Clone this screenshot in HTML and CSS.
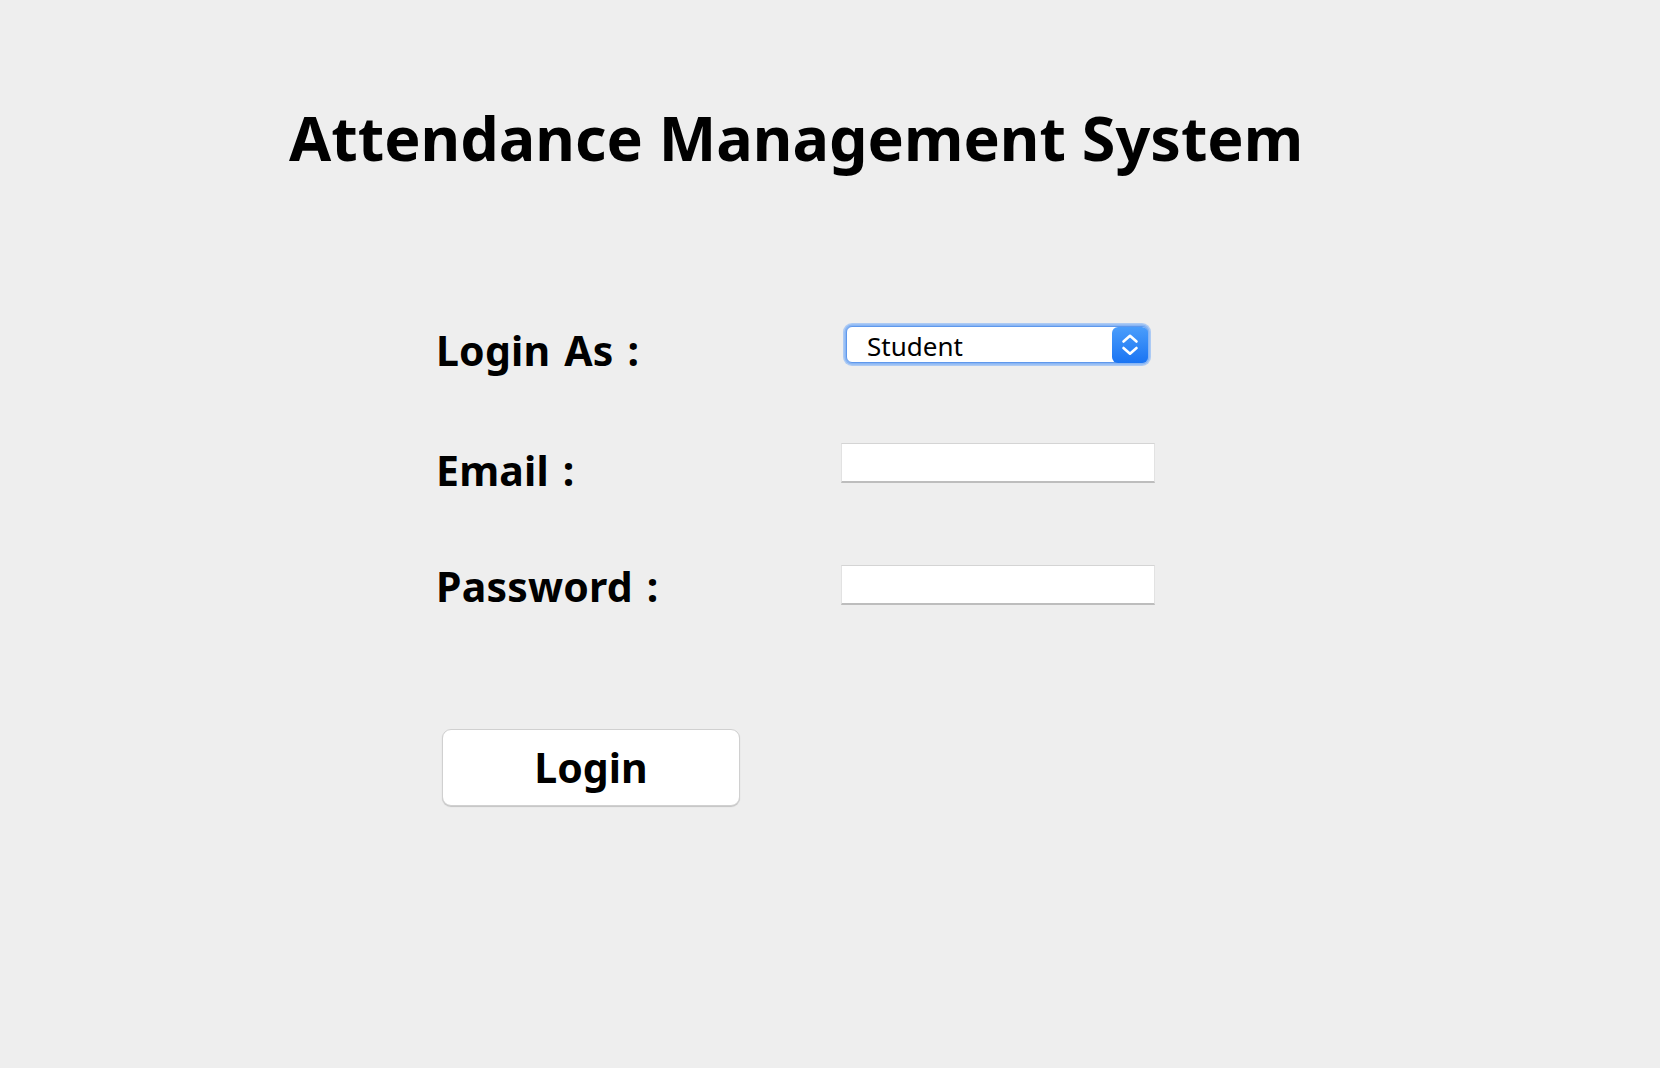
FILE: index.html
```html
<!DOCTYPE html>
<html lang="en">
<head>
<meta charset="utf-8">
<title>Attendance Management System</title>
<link rel="stylesheet" href="styles.css">
</head>
<body>
<main class="page">
  <h1 class="title">Attendance Management System</h1>
  <form class="form">
    <div class="grid">
      <label class="label">Login As :</label>
      <div class="select" role="combobox" aria-expanded="false">
        <span class="select-value">Student</span>
        <span class="select-arrows">
          <svg width="36" height="36" viewBox="0 0 36 36" aria-hidden="true">
            <path d="M11.5 14.5 L18 8.8 L24.5 14.5" fill="none" stroke="#fff" stroke-width="2.6" stroke-linecap="round" stroke-linejoin="round"/>
            <path d="M11.5 21 L18 26.7 L24.5 21" fill="none" stroke="#fff" stroke-width="2.6" stroke-linecap="round" stroke-linejoin="round"/>
          </svg>
        </span>
      </div>
      <label class="label">Email :</label>
      <input class="field" type="text">
      <label class="label label-tight">Password :</label>
      <input class="field" type="password">
    </div>
    <button class="login-btn" type="button">Login</button>
  </form>
</main>
</body>
</html>
```
FILE: styles.css
```css
html, body {
  margin: 0;
  padding: 0;
  background: #eeeeee;
}

body {
  font-family: "Noto Sans", "DejaVu Sans", sans-serif;
  color: #000;
  width: 1660px;
  height: 1068px;
  overflow: hidden;
}

.page {
  padding: 107px 0 0 289px;
}

.title {
  margin: 0;
  font-size: 61px;
  line-height: 61px;
  font-weight: 700;
  white-space: nowrap;
}

.form {
  margin: 155px 0 0 147px;
}

.grid {
  display: grid;
  grid-template-columns: 405px 316px;
  grid-template-rows: 120px 122px 164px;
  align-items: start;
}

.label {
  margin-top: 7px;
  font-size: 41px;
  line-height: 41px;
  font-weight: 700;
  letter-spacing: 0.2px;
  word-spacing: 3px;
  white-space: nowrap;
}

.label-tight {
  margin-top: 1px;
}

.select {
  margin: 3px 0 0 5px;
  width: 300px;
  height: 35px;
  display: flex;
  align-items: center;
  background: #fff;
  border: 1px solid #5f98ec;
  border-radius: 6px;
  box-shadow: 0 0 0 1.5px #8ab6f3, 0 0 0 3px rgba(150, 190, 245, 0.75);
}

.select-value {
  flex: 1;
  padding: 2px 0 0 20px;
  font-size: 26px;
  line-height: 26px;
}

.select-arrows {
  width: 36px;
  height: 36px;
  margin: 0 -1px 0 0;
  border-radius: 6px;
  background: linear-gradient(#4a9dfb, #1a74f3);
  display: flex;
}

.field {
  appearance: none;
  -webkit-appearance: none;
  box-sizing: border-box;
  margin: 0;
  width: 314px;
  height: 40px;
  padding: 0 6px;
  background: #fff;
  border: 1px solid #e2e2e2;
  border-top-color: #d4d4d4;
  border-bottom: 2px solid #bdbdbd;
  border-radius: 0;
  outline: none;
  font-family: inherit;
  font-size: 20px;
}

.login-btn {
  display: block;
  margin: 0 0 0 6px;
  box-sizing: border-box;
  width: 298px;
  height: 77px;
  padding: 0;
  background: #fff;
  border: 1px solid #d0d0d0;
  border-radius: 9px;
  box-shadow: 0 1px 1px rgba(0, 0, 0, 0.18);
  font-family: inherit;
  font-size: 41px;
  line-height: 41px;
  font-weight: 700;
  color: #000;
}
```
